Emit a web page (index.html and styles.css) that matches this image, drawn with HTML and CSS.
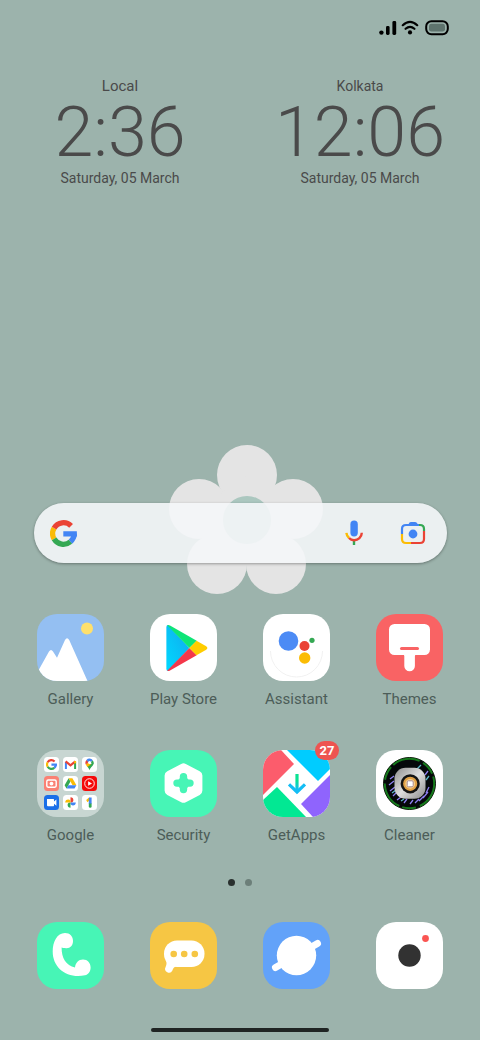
FILE: index.html
```html
<!DOCTYPE html>
<html lang="en">
<head>
  <meta charset="UTF-8">
  <meta name="viewport" content="width=device-width, initial-scale=1">
  <title>Home Screen</title>
  <link rel="stylesheet" href="styles.css">
</head>
<body>

<!-- shared shapes -->
<svg class="defs" aria-hidden="true">
  <symbol id="google-g" viewBox="0 0 27 27">
    <g fill="none" stroke-width="5.3">
      <path stroke="#fabb05" d="M4.1 8.1A10.8 10.8 0 0 0 4.1 18.9"/>
      <path stroke="#ea4335" d="M21.1 5.9A10.8 10.8 0 0 0 4.1 8.1"/>
      <path stroke="#4285f4" d="M20.4 21.8A10.8 10.8 0 0 0 24.2 13.8"/>
      <path stroke="#34a853" d="M4.1 18.9A10.8 10.8 0 0 0 20.4 21.8"/>
    </g>
    <path fill="#4285f4" d="M13.3 11.2H26.8L27 16.4H13.3z"/>
  </symbol>
</svg>

<header class="status-bar">
  <svg width="18" height="16" viewBox="0 0 18 16" role="img" aria-label="Signal">
    <circle cx="2.4" cy="12.6" r="2.2"/>
    <rect x="7" y="6" width="3.6" height="9" rx="1.4"/>
    <rect x="13.4" y="1" width="3.8" height="14" rx="1.4"/>
  </svg>
  <svg width="18" height="16" viewBox="0 0 18 16" role="img" aria-label="Wi-Fi">
    <circle cx="9" cy="12.4" r="2.1"/>
    <path d="M1.8 5.2Q9 -1.6 16.2 5.2M4.6 8.8Q9 4.8 13.4 8.8" fill="none" stroke="#000" stroke-width="2.2" stroke-linecap="round"/>
  </svg>
  <svg class="battery" width="24" height="16" viewBox="0 0 24 16" role="img" aria-label="Battery">
    <rect x="1.2" y="1.2" width="21.6" height="13" rx="5.2" fill="none" stroke="#000" stroke-width="2"/>
    <rect x="4" y="3.8" width="16" height="7.8" rx="2.4" fill="#5e736d"/>
  </svg>
</header>

<section class="clocks">
  <div class="clock home">
    <div class="city">Local</div>
    <div class="time">2:36</div>
    <div class="date">Saturday, 05 March</div>
  </div>
  <div class="clock">
    <div class="city">Kolkata</div>
    <div class="time">12:06</div>
    <div class="date">Saturday, 05 March</div>
  </div>
</section>

<div class="search-area">
  <svg class="flower" width="156" height="150" viewBox="0 0 156 150" aria-hidden="true">
    <g fill="#e4e4e4">
      <circle cx="78" cy="30" r="30"/>
      <circle cx="30" cy="64" r="30"/>
      <circle cx="124" cy="64" r="30"/>
      <circle cx="48" cy="119" r="30"/>
      <circle cx="107" cy="119" r="30"/>
      <path d="M78 30L124 64 107 119H48L30 64z"/>
    </g>
    <circle cx="78" cy="75" r="24" fill="#abc7bf"/>
  </svg>
  <form class="search">
    <svg width="27" height="27" aria-hidden="true"><use href="#google-g"/></svg>
    <input type="text" aria-label="Search">
    <button type="button" aria-label="Voice search">
      <svg width="26" height="26" viewBox="0 0 26 26">
        <rect x="9.4" y="0.5" width="7.4" height="16" rx="3.7" fill="#4285f4"/>
        <path d="M13 20.4V25" stroke="#34a853" stroke-width="2.4"/>
        <path d="M5.4 12.8A8 8 0 0 0 8 18" fill="none" stroke="#fbbc04" stroke-width="2.4"/>
        <path d="M8 18Q10 20.2 13 20.2A7.6 7.6 0 0 0 20.8 12.8" fill="none" stroke="#ea4335" stroke-width="2.4"/>
      </svg>
    </button>
    <button type="button" aria-label="Search with camera">
      <svg width="26" height="26" viewBox="0 0 26 26">
        <g fill="none" stroke-width="2.2">
          <path stroke="#4285f4" d="M2 14V9Q2 5 6 5H19"/>
          <path stroke="#34a853" d="M19 5H20Q24 5 24 9V11"/>
          <path stroke="#ea4335" d="M24 11V19Q24 23 20 23H11"/>
          <path stroke="#fbbc04" d="M11 23H6Q2 23 2 19V14"/>
        </g>
        <path fill="#4285f4" d="M8 5L9.5 2.6Q10 2 11 2H15Q16 2 16.5 2.6L18.5 5z"/>
        <circle cx="13" cy="14" r="4.4" fill="#4285f4"/>
      </svg>
    </button>
  </form>
</div>

<main class="apps">
  <a href="#" class="app">
    <span class="tile gallery">
      <svg viewBox="0 0 67 67" aria-hidden="true">
        <circle cx="50" cy="14.5" r="6" fill="#ffe06c"/>
        <path fill="#fff" d="M0 59L12 37.5Q14 34.5 16 37.5L20 43.8 28 26Q30 22.5 32.2 26L50.5 67H0z"/>
      </svg>
    </span>
    <span class="label">Gallery</span>
  </a>
  <a href="#" class="app">
    <span class="tile">
      <svg viewBox="0 0 67 67" aria-hidden="true">
        <defs>
          <linearGradient id="play-blue" x1="0" y1="1" x2="1" y2="0">
            <stop offset="0" stop-color="#00d9ff"/>
            <stop offset="1" stop-color="#12a8ec"/>
          </linearGradient>
        </defs>
        <path fill="url(#play-blue)" d="M16.4 13Q16.4 11 18 11L39.4 34 18 57Q16.4 57 16.4 55z"/>
        <path fill="#0ee577" d="M17.2 11.2Q18.4 10.6 20 11.5L46.7 26.8 39.4 34z"/>
        <path fill="#f4374a" d="M17.2 56.8Q18.4 57.4 20 56.5L46.7 41.2 39.4 34z"/>
        <path fill="#ffcd00" d="M46.5 26.7L55.8 32Q59 34 55.8 36L46.5 41.3 39.4 34z"/>
      </svg>
    </span>
    <span class="label">Play Store</span>
  </a>
  <a href="#" class="app">
    <span class="tile">
      <svg viewBox="0 0 67 67" aria-hidden="true">
        <path d="M7.5 37A26 26 0 0 0 59.5 37" fill="none" stroke="#f1f1f1" stroke-width="1"/>
        <circle cx="25.5" cy="27" r="9.8" fill="#4c8bf5"/>
        <circle cx="41.5" cy="32" r="5" fill="#ea4335"/>
        <circle cx="49" cy="26.3" r="2.6" fill="#34a853"/>
        <circle cx="41.7" cy="44" r="5.7" fill="#fbbc05"/>
      </svg>
    </span>
    <span class="label">Assistant</span>
  </a>
  <a href="#" class="app">
    <span class="tile themes">
      <svg viewBox="0 0 67 67" aria-hidden="true">
        <rect x="13" y="10" width="41" height="31" rx="5.5" fill="#fff"/>
        <path fill="#fff" d="M27.2 40.5Q28.3 41 28.3 42V52A5.3 5.3 0 0 0 38.9 52V42Q38.9 41 40 40.5z"/>
        <rect x="24" y="33" width="19" height="3" rx="1.5" fill="#f96364"/>
      </svg>
    </span>
    <span class="label">Themes</span>
  </a>

  <a href="#" class="app">
    <span class="tile folder">
      <svg viewBox="0 0 15 15"><rect width="15" height="15" rx="3.5" fill="#fff"/><use href="#google-g" x="2" y="2" width="11" height="11"/></svg>
      <svg viewBox="0 0 15 15">
        <rect width="15" height="15" rx="3.5" fill="#fff"/>
        <path d="M2.9 12V5" stroke="#4285f4" stroke-width="2"/>
        <path d="M12.1 12V5" stroke="#34a853" stroke-width="2"/>
        <path d="M2.6 4.4L7.5 8.3 12.4 4.4" fill="none" stroke="#ea4335" stroke-width="2.2"/>
        <path d="M12.1 4V6.3" stroke="#fbbc04" stroke-width="2"/>
      </svg>
      <svg viewBox="0 0 15 15">
        <rect width="15" height="15" rx="3.5" fill="#fff"/>
        <path fill="#34a853" d="M11.7 5.5C11.7 9 8.5 10 7.5 13.2 6.8 11.2 5.7 10 4.7 8.8z"/>
        <path fill="#fbbc04" d="M3.8 7.6L6.4 5 8.8 7.4 5.4 10z"/>
        <path fill="#ea4335" d="M3.7 7.5Q2.7 5 4.5 3L7 5z"/>
        <path fill="#4285f4" d="M4.4 3A4.1 4.1 0 0 1 10.8 3.2L7.4 6.2z"/>
        <path fill="#34a853" d="M10.8 3.2Q12.3 5.5 11 7.5L8.5 5.5z"/>
        <circle cx="7.6" cy="5.6" r="1.5" fill="#fff"/>
      </svg>
      <svg viewBox="0 0 15 15">
        <rect width="15" height="15" rx="3.5" fill="#fa8174"/>
        <rect x="2.8" y="4" width="9.4" height="7.2" rx="1.4" fill="none" stroke="#fff" stroke-width="1.4"/>
        <circle cx="7.5" cy="7.6" r="1.9" fill="#fff"/>
      </svg>
      <svg viewBox="0 0 15 15">
        <rect width="15" height="15" rx="3.5" fill="#fff"/>
        <path fill="#34a853" d="M5.6 2.2L7.5 5.5 3.5 12.4 1.6 9.2z"/>
        <path fill="#fbbc04" d="M5.6 2.2H9.4L13.4 9.2H9.6z"/>
        <path fill="#4285f4" d="M5.4 9.2H13.4L11.5 12.4H3.5z"/>
      </svg>
      <svg viewBox="0 0 15 15">
        <rect width="15" height="15" rx="3.5" fill="#f50a0a"/>
        <circle cx="7.5" cy="7.5" r="4.8" fill="none" stroke="#fff" stroke-width=".9"/>
        <path fill="#fff" d="M6.1 5.2L10 7.5 6.1 9.8z"/>
      </svg>
      <svg viewBox="0 0 15 15">
        <rect width="15" height="15" rx="3.5" fill="#1a6fe8"/>
        <path fill="#fff" d="M3 4H9.4Q10 4 10 4.6V6.5L12.4 4.5V10.7L10 8.7V10.5Q10 11.2 9.4 11.2H4Q3 11.2 3 10.2z"/>
      </svg>
      <svg viewBox="0 0 15 15">
        <rect width="15" height="15" rx="3.5" fill="#fff"/>
        <path fill="#ea4335" d="M7.5 7.5V2.2A3 3 0 0 1 10.4 5.2Q10.4 6.8 9 7.5z"/>
        <path fill="#4285f4" d="M7.5 7.5H12.8A3 3 0 0 1 9.8 10.4Q8.2 10.4 7.5 9z"/>
        <path fill="#34a853" d="M7.5 7.5V12.8A3 3 0 0 1 4.6 9.8Q4.6 8.2 6 7.5z"/>
        <path fill="#fbbc04" d="M7.5 7.5H2.2A3 3 0 0 1 5.2 4.6Q6.8 4.6 7.5 6z"/>
      </svg>
      <svg viewBox="0 0 15 15">
        <rect width="15" height="15" rx="3.5" fill="#fff"/>
        <path fill="#fbbc04" d="M7 2.4L8.4 4.8 5.4 7.2 4.2 5z"/>
        <path fill="#4285f4" d="M7 2.4H9.6V9H6.8V4z"/>
        <path fill="#34a853" d="M6.8 8.4H9.6V11.4A1.4 1.4 0 0 1 6.8 11.4z"/>
      </svg>
    </span>
    <span class="label">Google</span>
  </a>
  <a href="#" class="app">
    <span class="tile mint">
      <svg viewBox="0 0 67 67" aria-hidden="true">
        <path fill="#fff" stroke="#fff" stroke-width="10" stroke-linejoin="round" d="M33.5 18.4L47.4 25.6V40.6L33.5 47.8 19.6 40.6V25.6z"/>
        <path stroke="#47f5b6" stroke-width="7.4" stroke-linecap="round" d="M33.5 26.6V39.6M27 33.1H40"/>
        <circle cx="33.5" cy="33.1" r="6" fill="#47f5b6"/>
      </svg>
    </span>
    <span class="label">Security</span>
  </a>
  <a href="#" class="app">
    <span class="tile">
      <svg viewBox="0 0 67 67" aria-hidden="true">
        <defs>
          <linearGradient id="arrow" gradientUnits="userSpaceOnUse" x1="0" y1="24" x2="0" y2="40">
            <stop offset=".4" stop-color="#0be293"/>
            <stop offset="1" stop-color="#13bdf5"/>
          </linearGradient>
        </defs>
        <path fill="#fc5c6c" d="M0 0H18L31 14 0 45z"/>
        <path fill="#00ccff" d="M24 0H67V19L55 31z"/>
        <path fill="#8f64fd" d="M67 25V67H50L38 54z"/>
        <path fill="#02e893" d="M14 37L43 67H0V50z"/>
        <path fill="none" stroke="url(#arrow)" stroke-width="3.2" d="M34 24V42"/>
        <path fill="none" stroke="#13bdf5" stroke-width="3.2" d="M26 34.4L34 42 42 34.4"/>
      </svg>
    </span>
    <span class="badge">27</span>
    <span class="label">GetApps</span>
  </a>
  <a href="#" class="app">
    <span class="tile">
      <svg viewBox="0 0 67 67" aria-hidden="true">
        <defs>
          <linearGradient id="metal" x1="0" y1="0" x2="1" y2="1">
            <stop offset="0" stop-color="#8f8f8f"/>
            <stop offset=".5" stop-color="#dedede"/>
            <stop offset="1" stop-color="#8a8a8a"/>
          </linearGradient>
        </defs>
        <circle cx="33.5" cy="33.5" r="26" fill="#05080a" stroke="#0a1408" stroke-width="1"/>
        <circle cx="33.5" cy="33.5" r="24.7" fill="none" stroke="#167a1c" stroke-width="2" stroke-dasharray="28 4 14 3"/>
        <g fill="none" stroke-width="1.3">
          <path stroke="#8d7ff0" d="M14 29L18 26M13 35L18 31M14 41L19 37M17 46L21 42M21 50L25 47M28 53L31 49M34 54L37 50"/>
          <path stroke="#8d7ff0" d="M39 53L43 49M43 51L48 46M47 48L52 42M50 43L53 37M49 25L52 21"/>
          <path stroke="#5bb6c9" d="M16 43L20 40M25 51L28 49M41 19L45 15M50 30L53 26"/>
        </g>
        <rect x="18.5" y="17.8" width="31" height="31" rx="11" fill="url(#metal)"/>
        <circle cx="34.2" cy="33.8" r="9.6" fill="#141414"/>
        <circle cx="34.2" cy="33.8" r="6" fill="#f5cf8c" stroke="#e0a046" stroke-width="2.2"/>
        <rect x="31.2" y="30.8" width="6" height="6" rx="1.2" fill="#fff" stroke="#a78a92" stroke-width="1"/>
      </svg>
    </span>
    <span class="label">Cleaner</span>
  </a>
</main>

<div class="pages">
  <span class="dot active"></span>
  <span class="dot"></span>
</div>

<nav class="dock">
  <a href="#" class="tile mint" aria-label="Phone">
    <svg viewBox="0 0 67 67" aria-hidden="true">
      <path fill="#fff" d="M28 11C33 11 36 14.5 36 19C36 24 32.5 27 28 26Q26 26 24.6 25.5C24.5 36 29 43.5 38 45.5C38.5 41 41.5 37.5 46 37.5C50.5 37.5 53.6 41 53.6 45.5C53.6 49.5 51.5 52.5 48 53.3C30 57 15.7 46 15.7 29.5C15.7 20 20 11 28 11z"/>
    </svg>
  </a>
  <a href="#" class="tile messages" aria-label="Messages">
    <svg viewBox="0 0 67 67" aria-hidden="true">
      <rect x="14" y="18.5" width="40.5" height="26.5" rx="13" fill="#fff"/>
      <path fill="#fff" d="M15.5 38Q17.5 41 15.6 45A3.8 3.8 0 0 0 22.4 48.5Q23.4 45 26 44.5z"/>
      <g fill="#f6c644">
        <circle cx="23.7" cy="32" r="3.3"/>
        <circle cx="34.2" cy="32" r="3.3"/>
        <circle cx="44.8" cy="32" r="3.3"/>
      </g>
    </svg>
  </a>
  <a href="#" class="tile browser" aria-label="Browser">
    <svg viewBox="0 0 67 67" aria-hidden="true">
      <path stroke="#fff" stroke-width="7" stroke-linecap="round" d="M12.5 45.5L54.5 21.5"/>
      <circle cx="33.5" cy="33.5" r="19.7" fill="#fff"/>
    </svg>
  </a>
  <a href="#" class="tile" aria-label="Camera">
    <svg viewBox="0 0 67 67" aria-hidden="true">
      <circle cx="33.5" cy="33.5" r="11.2" fill="#323232"/>
      <circle cx="49.5" cy="16.5" r="3.4" fill="#fa5552"/>
    </svg>
  </a>
</nav>

<div class="home-bar"></div>

</body>
</html>
```
FILE: styles.css
```css
* {
  margin: 0;
  padding: 0;
  box-sizing: border-box;
}

body {
  font-family: Roboto, sans-serif;
  background: #9cb3ac;
  color: #4a4a4a;
  min-height: 100vh;
  display: flex;
  flex-direction: column;
}

.defs {
  position: absolute;
  width: 0;
  height: 0;
}

/* Top */
.status-bar {
  display: flex;
  justify-content: flex-end;
  gap: 4px;
  padding: 20px 31px 0 0;
}

.status-bar .battery {
  margin-left: 2px;
}

.clocks {
  display: grid;
  grid-template-columns: 1fr 1fr;
  padding-top: 40px;
  text-align: center;
}

.city, .date {
  font-size: 14px;
  line-height: 20px;
}

.home .city {
  font-size: 15px;
}

.time {
  font-size: 70px;
  font-weight: 300;
  line-height: 72px;
}

/* Search */
.search-area {
  position: relative;
  margin: auto 33px 0 34px;
}

.flower {
  position: absolute;
  left: 50%;
  bottom: -32px;
  margin-left: -72px;
}

.search {
  position: relative;
  display: flex;
  align-items: center;
  height: 60px;
  padding: 0 21px 0 16px;
  border-radius: 30px;
  background: rgba(244, 246, 248, 0.9);
  box-shadow: 0 1px 3px rgba(0, 0, 0, 0.35);
}

.search input {
  flex: 1;
  min-width: 0;
  height: 40px;
  margin: 0 12px;
  border: none;
  outline: none;
  background: transparent;
  font: inherit;
}

.search button {
  width: 26px;
  height: 26px;
  border: none;
  background: none;
  cursor: pointer;
}

.search button + button {
  margin-left: 33px;
}

/* App grid */
.apps, .dock {
  display: grid;
  grid-template-columns: repeat(4, 1fr);
  justify-items: center;
  padding: 0 14px;
}

.apps {
  row-gap: 41px;
  margin-top: 51px;
}

.app {
  position: relative;
  display: flex;
  flex-direction: column;
  align-items: center;
  color: #4c5d58;
  text-decoration: none;
}

.tile {
  display: block;
  width: 67px;
  height: 67px;
  border-radius: 20px;
  background: #fff;
  overflow: hidden;
}

.tile svg {
  display: block;
  width: 100%;
}

.gallery { background: #94bff2; }
.themes { background: #f96364; }
.mint { background: #47f5b6; }
.messages { background: #f6c644; }
.browser { background: #62a2f9; }

.folder {
  display: grid;
  grid-template-columns: repeat(3, 15px);
  gap: 4px;
  place-content: center;
  background: #c8d6d2;
}

.label {
  margin-top: 8px;
  font-size: 15px;
  line-height: 20px;
}

.badge {
  position: absolute;
  top: -9px;
  right: -9px;
  width: 24px;
  border-radius: 10px;
  background: #ee5450;
  color: #fff;
  font-size: 13px;
  font-weight: 700;
  line-height: 19px;
  text-align: center;
}

/* Bottom */
.pages {
  display: flex;
  justify-content: center;
  gap: 10px;
  margin-top: 34px;
}

.dot {
  width: 7px;
  height: 7px;
  border-radius: 50%;
  background: #6c7f79;
}

.dot.active {
  background: #29302e;
}

.dock {
  margin-top: 36px;
}

.home-bar {
  width: 37%;
  height: 4px;
  margin: 39px auto 8px;
  border-radius: 2px;
  background: #1f2423;
}
```
